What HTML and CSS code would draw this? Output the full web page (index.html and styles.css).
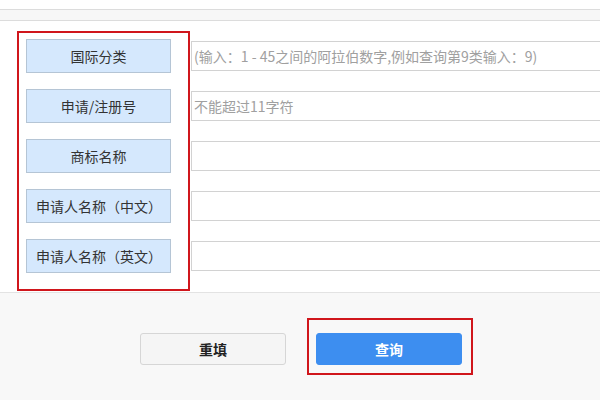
FILE: index.html
```html
<!DOCTYPE html>
<html lang="zh-CN">
<head>
<meta charset="utf-8">
<title>商标查询</title>
<link rel="stylesheet" href="styles.css">
</head>
<body>
<div class="top-space"></div>
<div class="band"></div>
<div class="form">
  <div class="labels">
    <div class="label">国际分类</div>
    <div class="label">申请/注册号</div>
    <div class="label">商标名称</div>
    <div class="label left">申请人名称（中文）</div>
    <div class="label left">申请人名称（英文）</div>
  </div>
  <div class="fields">
    <input class="field" type="text" placeholder="(输入：1 - 45之间的阿拉伯数字,例如查询第9类输入：9)">
    <input class="field" type="text" placeholder="不能超过11字符">
    <input class="field" type="text">
    <input class="field" type="text">
    <input class="field" type="text">
  </div>
</div>
<div class="footer">
  <button class="btn reset" type="button">重填</button>
  <div class="highlight">
    <button class="btn search" type="button">查询</button>
  </div>
</div>
</body>
</html>
```
FILE: styles.css
```css
html, body {
  margin: 0;
  padding: 0;
  height: 100%;
}
body {
  font-family: "Noto Sans CJK SC", "Noto Sans", sans-serif;
  font-size: 14px;
  color: #333;
  background: #f8f8f8;
  overflow: hidden;
}
.top-space {
  height: 9px;
  background: #fff;
}
.band {
  height: 10px;
  background: #f7f7f7;
  border-top: 1px solid #dcdcdc;
  border-bottom: 1px solid #dcdcdc;
}
.form {
  display: flex;
  align-items: flex-start;
  background: #fff;
  padding: 10px 0 1px 17px;
  border-bottom: 1px solid #e3e3e3;
}
.labels {
  display: flex;
  flex-direction: column;
  gap: 16px;
  border: 2px solid #d0161c;
  padding: 6px 17px 16px 7px;
}
.label {
  width: 145px;
  height: 34px;
  box-sizing: border-box;
  background: #d5e8fd;
  border: 1px solid #b5c5d5;
  display: flex;
  align-items: center;
  justify-content: center;
  color: #333;
  font-size: 14px;
}
.label.left {
  justify-content: flex-start;
  padding-left: 9px;
}
.fields {
  flex: 1;
  display: flex;
  flex-direction: column;
  gap: 20px;
  margin-left: 1px;
  padding-top: 10px;
}
.field {
  display: block;
  width: 100%;
  height: 30px;
  box-sizing: border-box;
  margin: 0;
  border: 1px solid #d2d2d2;
  border-right: none;
  border-radius: 0;
  padding: 0 0 0 2px;
  font-family: "Noto Sans CJK SC", "Noto Sans", sans-serif;
  font-size: 14px;
  color: #333;
  background: #fff;
  outline: none;
}
.field::placeholder {
  color: #a0a0a0;
}
.footer {
  display: flex;
  align-items: flex-start;
  padding-left: 140px;
}
.btn {
  width: 146px;
  height: 32px;
  box-sizing: border-box;
  border-radius: 3px;
  font-family: "Noto Sans CJK SC", "Noto Sans", sans-serif;
  font-size: 14px;
  font-weight: bold;
  cursor: pointer;
  margin: 0;
  padding: 0;
}
.reset {
  margin-top: 40px;
  background: #f5f5f5;
  border: 1px solid #d6d6d6;
  color: #222;
}
.highlight {
  margin-top: 25px;
  margin-left: 21px;
  border: 2px solid #d0161c;
  padding: 13px 9px 8px 7px;
}
.search {
  display: block;
  background: #3d8ef0;
  border: 1px solid #3d8ef0;
  color: #fff;
}
```
